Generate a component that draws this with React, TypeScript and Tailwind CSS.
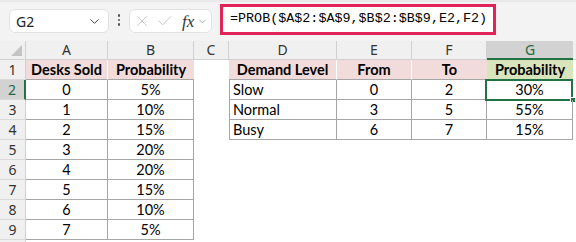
import { ChevronDown, X, Check } from "lucide-react";

const cols = ["A", "B", "C", "D", "E", "F", "G"];

const sold = [
    ["0", "5%"],
    ["1", "10%"],
    ["2", "15%"],
    ["3", "20%"],
    ["4", "20%"],
    ["5", "15%"],
    ["6", "10%"],
    ["7", "5%"],
];

const levels = [
    ["Slow", "0", "2", "30%"],
    ["Normal", "3", "5", "55%"],
    ["Busy", "6", "7", "15%"],
];

const cellFont = "font-['Lato','Liberation_Sans',sans-serif] text-[14.5px] text-black";
const line = "border-[#a6a6a6]";

function RowHead({ n, label = true }: { n: number; label?: boolean }) {
    const sel = n === 2;
    return (
        <div
            className={
                "h-[20px] leading-[19px] text-center text-[14px] font-['Noto_Sans',sans-serif] border-b border-[#dadada] " +
                (sel
                    ? "bg-[#d2d2d2] text-[#1e6b41] border-r-2 border-r-[#217346]"
                    : "bg-[#f0f0f0] text-[#333] border-r border-r-[#d0d0d0]")
            }
        >
            {label ? n : ""}
        </div>
    );
}

export default function App() {
    return (
        <div className="w-[576px] h-[242px] overflow-hidden bg-white">
            {/* formula bar */}
            <div className="h-[41px] bg-[#f3f3f3] flex items-start border-t-2 border-[#e8e8e8]">
                <div className="ml-[9px] mt-[7px] w-[100px] h-[24px] bg-white rounded-[6px] border border-[#e3e3e3] flex items-center justify-between pl-[6px] pr-[6px]">
                    <span className="font-['Noto_Sans',sans-serif] text-[14px] text-[#222]">G2</span>
                    <ChevronDown size={15} strokeWidth={1.6} className="text-[#444]" />
                </div>
                <div className="ml-[8px] mt-[12px] flex flex-col gap-[2px] w-[4px] items-center">
                    <span className="w-[2.5px] h-[2.5px] rounded-full bg-[#555]" />
                    <span className="w-[2.5px] h-[2.5px] rounded-full bg-[#555]" />
                    <span className="w-[2.5px] h-[2.5px] rounded-full bg-[#555]" />
                </div>
                <div className="ml-[8px] mt-[7px] w-[83px] h-[24px] bg-white rounded-[6px] border border-[#e3e3e3] flex items-center pl-[3px]">
                    <X size={18} strokeWidth={1.1} className="text-[#bdbdbd]" />
                    <Check size={18} strokeWidth={1.1} className="text-[#bdbdbd] ml-[5px]" />
                    <span className="ml-[8px] font-['Liberation_Serif',serif] italic text-[17px] text-[#333] leading-none">
                        fx
                    </span>
                    <ChevronDown size={11} strokeWidth={1.6} className="text-[#888] ml-[3px]" />
                </div>
                <div className="ml-[8px] mt-[2px] w-[276px] h-[31px] bg-white border-[3px] border-[#e0245a] flex items-center pl-[7px]">
                    <span className="font-['Liberation_Mono',monospace] text-[13.4px] text-black">
                        =PROB($A$2:$A$9,$B$2:$B$9,E2,F2)
                    </span>
                </div>
            </div>

            {/* sheet */}
            <div className="grid grid-cols-[26px_82px_86px_35px_108px_75px_75px_86px_3px]">
                {/* column headers */}
                <div className="h-[19px] bg-[#f0f0f0] border-r border-b border-[#d0d0d0] relative">
                    <div className="absolute right-[3px] bottom-[3px] w-0 h-0 border-l-[11px] border-l-transparent border-b-[11px] border-b-[#c4c4c4]" />
                </div>
                {cols.map((c) =>
                    c === "G" ? (
                        <div
                            key={c}
                            className="h-[19px] leading-[17px] text-center bg-[#d2d2d2] text-[#1e6b41] border-b-2 border-[#217346] font-['Noto_Sans',sans-serif] text-[14px]"
                        >
                            {c}
                        </div>
                    ) : (
                        <div
                            key={c}
                            className="h-[19px] leading-[18px] text-center bg-[#f0f0f0] text-[#333] border-r border-b border-[#d0d0d0] font-['Noto_Sans',sans-serif] text-[14px]"
                        >
                            {c}
                        </div>
                    )
                )}
                <div className="h-[19px] bg-[#f0f0f0] border-b border-[#d0d0d0]" />

                {/* row 1 */}
                <RowHead n={1} />
                <div className={`h-[20px] leading-[20px] text-center font-bold bg-[#f2dcdb] border-r border-r-white border-b ${line} ${cellFont}`}>
                    Desks Sold
                </div>
                <div className={`h-[20px] leading-[20px] text-center font-bold bg-[#f2dcdb] border-b ${line} ${cellFont}`}>
                    Probability
                </div>
                <div className="h-[20px]" />
                <div className={`h-[20px] leading-[20px] text-center font-bold bg-[#f2dcdb] border-r border-r-white border-b ${line} ${cellFont}`}>
                    Demand Level
                </div>
                <div className={`h-[20px] leading-[20px] text-center font-bold bg-[#f2dcdb] border-r border-r-white border-b ${line} ${cellFont}`}>
                    From
                </div>
                <div className={`h-[20px] leading-[20px] text-center font-bold bg-[#f2dcdb] border-b ${line} ${cellFont}`}>
                    To
                </div>
                <div className={`h-[20px] leading-[20px] text-center font-bold bg-[#d8e4bc] border-b ${line} ${cellFont}`}>
                    Probability
                </div>
                <div className="h-[20px]" />

                {/* rows 2-9 */}
                {sold.map(([a, b], i) => {
                    const lv = levels[i];
                    return [
                        <RowHead key={"h" + i} n={i + 2} />,
                        <div key={"a" + i} className={`h-[20px] leading-[20px] text-center border-r border-b ${line} ${cellFont}`}>
                            {a}
                        </div>,
                        <div key={"b" + i} className={`h-[20px] leading-[20px] text-center border-r border-b ${line} ${cellFont}`}>
                            {b}
                        </div>,
                        <div key={"c" + i} className="h-[20px]" />,
                        lv ? (
                            <div key={"d" + i} className={`h-[20px] leading-[20px] pl-[3px] border-l border-r border-b ${line} ${cellFont}`}>
                                {lv[0]}
                            </div>
                        ) : (
                            <div key={"d" + i} className="h-[20px]" />
                        ),
                        lv ? (
                            <div key={"e" + i} className={`h-[20px] leading-[20px] text-center border-r border-b ${line} ${cellFont}`}>
                                {lv[1]}
                            </div>
                        ) : (
                            <div key={"e" + i} className="h-[20px]" />
                        ),
                        lv ? (
                            <div key={"f" + i} className={`h-[20px] leading-[20px] text-center border-r border-b ${line} ${cellFont}`}>
                                {lv[2]}
                            </div>
                        ) : (
                            <div key={"f" + i} className="h-[20px]" />
                        ),
                        lv ? (
                            <div key={"g" + i} className={`relative h-[20px] leading-[20px] text-center border-r border-b ${line} ${cellFont}`}>
                                {lv[3]}
                                {i === 0 && (
                                    <>
                                        <div className="absolute -left-[2px] -top-[1px] w-[88px] h-[22px] border-2 border-[#217346]" />
                                        <div className="absolute -right-[4px] -bottom-[4px] w-[6px] h-[6px] bg-[#217346] border border-white" />
                                    </>
                                )}
                            </div>
                        ) : (
                            <div key={"g" + i} className="h-[20px]" />
                        ),
                        <div key={"z" + i} className="h-[20px]" />,
                    ];
                })}
                <RowHead n={10} label={false} />
            </div>
        </div>
    );
}
